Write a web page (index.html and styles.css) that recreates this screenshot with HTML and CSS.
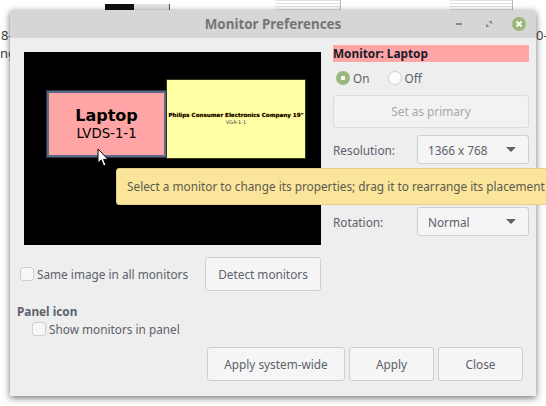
FILE: index.html
```html
<!DOCTYPE html>
<html lang="en">
<head>
    <meta charset="UTF-8">
    <title>Monitor Preferences</title>
    <link rel="stylesheet" href="styles.css">
</head>
<body>
    <div class="desktop">
        <div class="peek peek-a"></div>
        <div class="peek peek-b"></div>
        <div class="peek peek-c"></div>
        <span class="bg-text bg-left-1">8-</span>
        <span class="bg-text bg-left-2">ng</span>
        <span class="bg-text bg-right">0-</span>

        <div class="window">
            <div class="titlebar">
                <span class="title">Monitor Preferences</span>
                <div class="wm-buttons">
                    <svg class="wm-min" width="8" height="8" viewBox="0 0 8 8"><rect x="1" y="3" width="6" height="2" fill="#8a8a8a"/></svg>
                    <svg class="wm-max" width="8" height="8" viewBox="0 0 8 8"><path d="M3.5 1H7v3.5zM1 3.5L4.5 7H1z" fill="#8a8a8a"/></svg>
                    <svg class="wm-close" width="14" height="14" viewBox="0 0 14 14"><circle cx="7" cy="7" r="7" fill="#9ab87c"/><path d="M4.5 4.5l5 5M9.5 4.5l-5 5" stroke="#fff" stroke-width="1.8"/></svg>
                </div>
            </div>
            <div class="content">
                <div class="main">
                    <div class="left">
                        <div class="canvas">
                            <div class="monitor laptop">
                                <div class="mon-name">Laptop</div>
                                <div class="mon-port">LVDS-1-1</div>
                            </div>
                            <div class="monitor philips">
                                <div class="ph-name">Philips Consumer Electronics Company 19"</div>
                                <div class="ph-port">VGA-1-1</div>
                            </div>
                        </div>
                        <div class="under-canvas">
                            <label class="check"><span class="box"></span>Same image in all monitors</label>
                            <button class="btn detect">Detect monitors</button>
                        </div>
                    </div>
                    <div class="right">
                        <div class="mon-heading">Monitor: Laptop</div>
                        <div class="radios">
                            <label class="radio"><span class="dot on"></span>On</label>
                            <label class="radio"><span class="dot"></span>Off</label>
                        </div>
                        <button class="btn primary" disabled>Set as primary</button>
                        <div class="row">
                            <span class="row-label">Resolution:</span>
                            <div class="combo"><span>1366 x 768</span><span class="arrow"></span></div>
                        </div>
                        <div class="row"></div>
                        <div class="row">
                            <span class="row-label">Rotation:</span>
                            <div class="combo"><span>Normal</span><span class="arrow"></span></div>
                        </div>
                    </div>
                </div>
                <div class="panel-title">Panel icon</div>
                <label class="check panel-check"><span class="box"></span>Show monitors in panel</label>
                <div class="actions">
                    <button class="btn wide">Apply system-wide</button>
                    <button class="btn apply">Apply</button>
                    <button class="btn close">Close</button>
                </div>
            </div>
        </div>

        <div class="tooltip">Select a monitor to change its properties; drag it to rearrange its placement</div>

        <svg class="cursor" width="12" height="20" viewBox="0 0 12 20">
            <path d="M1 1v14l3.2-3 2.4 6 2.4-1-2.4-5.6h4.4z" fill="#fff" stroke="#000" stroke-width="1"/>
        </svg>
    </div>
</body>
</html>
```

FILE: styles.css
```css
* {
    box-sizing: border-box;
}
body {
    margin: 0;
    font-family: "Noto Sans", sans-serif;
    font-size: 11.8px;
    color: #5c616c;
    background-color: white;
}
.desktop {
    position: relative;
    width: 546px;
    height: 406px;
    overflow: hidden;
}
.peek {
    position: absolute;
    top: 0;
    height: 10px;
}
.peek-a {
    left: 105px;
    top: 4px;
    width: 65px;
    height: 6px;
    background: linear-gradient(to right, #111 0 29px, #e4e4e4 29px 64px, #555 64px);
}
.peek-b {
    left: 275px;
    width: 66px;
    border-right: 1px solid #bbb;
    background: repeating-linear-gradient(to bottom, #dde3dd 0 1px, #fff 1px 3px);
}
.peek-c {
    left: 450px;
    width: 63px;
    border-right: 1px solid #bbb;
    background: repeating-linear-gradient(to bottom, #dde3dd 0 1px, #fff 1px 3px);
}
.bg-text {
    position: absolute;
    font-size: 13px;
    color: #444;
}
.bg-left-1 {
    left: 1px;
    top: 26px;
}
.bg-left-2 {
    left: 0;
    top: 44px;
}
.bg-right {
    left: 536px;
    top: 26px;
}

.window {
    position: absolute;
    left: 10px;
    top: 10px;
    width: 526px;
    height: 386px;
    background-color: #eeeeee;
    border-radius: 3px 3px 0 0;
    box-shadow: 0 2px 7px rgba(0,0,0,0.55);
}
.titlebar {
    position: relative;
    height: 28px;
    background-color: #d6d6d6;
    border-radius: 3px 3px 0 0;
    display: flex;
    align-items: center;
    justify-content: center;
}
.title {
    font-size: 13.4px;
    font-weight: bold;
    color: #757575;
}
.wm-buttons {
    position: absolute;
    right: 10px;
    top: 7px;
    display: flex;
    align-items: center;
    gap: 19px;
}
.wm-min {
    margin-right: 3px;
}
.content {
    padding: 7px 7px 0 7px;
}
.main {
    display: flex;
    gap: 12px;
}
.left {
    width: 304px;
}
.canvas {
    position: relative;
    width: 297px;
    height: 193px;
    margin: 7px 0 0 7px;
    background-color: black;
}
.monitor {
    position: absolute;
    text-align: center;
    font-family: "DejaVu Sans", sans-serif;
    color: black;
}
.laptop {
    left: 22px;
    top: 38px;
    width: 121px;
    height: 68px;
    background-color: #ffa5a5;
    border: 3px solid #5a6a8a;
    outline: 1px solid #2e3440;
    outline-offset: -1px;
    padding-top: 13px;
}
.mon-name {
    font-size: 16px;
    font-weight: bold;
    line-height: 19px;
}
.mon-port {
    font-size: 13.3px;
    line-height: 17px;
}
.philips {
    left: 142px;
    top: 27px;
    width: 140px;
    height: 80px;
    background-color: #ffffa5;
    border: 1px solid #33331c;
    padding-top: 32px;
}
.ph-name {
    font-size: 5.6px;
    font-weight: bold;
    line-height: 7px;
    white-space: nowrap;
    text-shadow: 0 0 1px #b36b00;
}
.ph-port {
    font-size: 5px;
    line-height: 6px;
    color: #444;
}
.under-canvas {
    display: flex;
    align-items: center;
    justify-content: space-between;
    margin-top: 12px;
    padding-left: 3px;
}
.check {
    display: flex;
    align-items: center;
    gap: 3px;
}
.box {
    width: 14px;
    height: 14px;
    background-color: #f7f7f7;
    border: 1px solid #cfcfcf;
    border-radius: 3px;
}
.btn {
    font-family: "Noto Sans", sans-serif;
    font-size: 11.8px;
    color: #5c616c;
    background-color: #f5f5f5;
    border: 1px solid #cfcfcf;
    border-radius: 3px;
    padding: 0;
    height: 34px;
}
.detect {
    width: 116px;
}
.right {
    width: 196px;
}
.mon-heading {
    height: 17px;
    line-height: 17px;
    background-color: #ffa5a5;
    color: #1a1a2a;
    font-weight: bold;
}
.radios {
    display: flex;
    gap: 18px;
    margin: 9px 0 10px 3px;
    height: 14px;
}
.radio {
    display: flex;
    align-items: center;
    gap: 3px;
}
.dot {
    width: 14px;
    height: 14px;
    background-color: #fbfbfb;
    border: 1px solid #cfcfcf;
    border-radius: 50%;
}
.dot.on {
    border: none;
    background: radial-gradient(circle, #fff 0 2px, #9ab87c 2.5px);
}
.primary {
    display: block;
    width: 196px;
    height: 33px;
    padding-bottom: 2px;
    color: #a5a8ae;
    background-color: #f2f2f2;
    border-color: #dcdcdc;
    margin-bottom: 7px;
}
.row {
    display: flex;
    align-items: center;
    justify-content: space-between;
    height: 29px;
    margin-bottom: 7px;
}
.combo {
    width: 112px;
    height: 29px;
    background-color: #f5f5f5;
    border: 1px solid #cfcfcf;
    border-radius: 3px;
    display: flex;
    align-items: center;
    justify-content: space-between;
    padding: 0 12px 0 10px;
}
.arrow {
    width: 0;
    height: 0;
    border-left: 5px solid transparent;
    border-right: 5px solid transparent;
    border-top: 5px solid #5c616c;
}
.panel-title {
    font-weight: bold;
    margin-top: 12px;
    line-height: 16px;
}
.panel-check {
    margin: 2px 0 0 15px;
}
.actions {
    display: flex;
    justify-content: flex-end;
    gap: 4px;
    margin: 10px 6px 0 0;
}
.wide {
    width: 138px;
}
.apply, .close {
    width: 85px;
}
.tooltip {
    position: absolute;
    left: 116px;
    top: 168px;
    width: 460px;
    height: 37px;
    line-height: 35px;
    padding-left: 10px;
    white-space: nowrap;
    background-color: #fae59b;
    border: 1px solid #e3cf86;
    border-radius: 3px;
    color: #5c5a50;
}
.cursor {
    position: absolute;
    left: 97px;
    top: 148px;
}
```
